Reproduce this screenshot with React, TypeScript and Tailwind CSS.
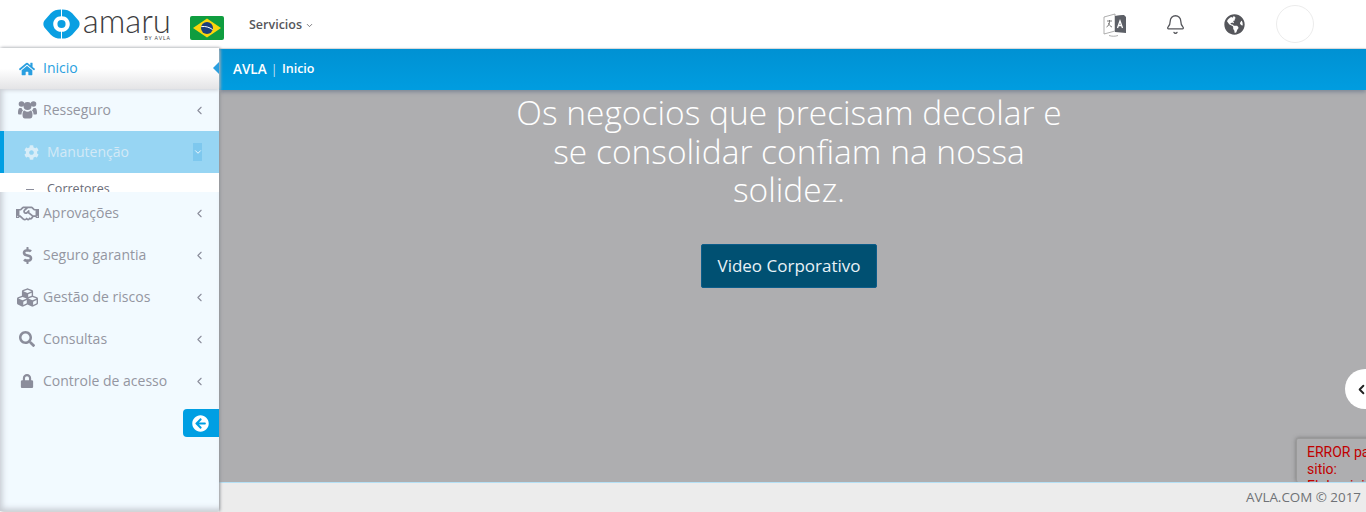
import React from "react";
import {
  FaArrowCircleLeft,
  FaCog,
  FaCubes,
  FaDollarSign,
  FaGlobeAmericas,
  FaHome,
  FaLock,
  FaRegHandshake,
  FaSearch,
} from "react-icons/fa";
import { Bell, ChevronDown, ChevronLeft } from "lucide-react";

const MenuRow = ({ icon, label }: { icon: React.ReactNode; label: string }) => (
  <div className="flex h-[42px] shrink-0 items-center text-[14px] text-[#9496a1]">
    <span className="ml-[9px] mr-[-2px] flex w-[36px] shrink-0 justify-center text-[#8b8d9b]">{icon}</span>
    <span className="flex-1 pb-[2px]">{label}</span>
    <ChevronLeft size={13} strokeWidth={2} className="mr-[13px] text-[#8b8d9b]" />
  </div>
);

const UsersIcon = () => (
  <svg width="19" height="18" viewBox="0 0 19 18" fill="currentColor">
    <circle cx="3.500" cy="3" r="2.800" />
    <circle cx="15.500" cy="3" r="2.800" />
    <circle cx="9.500" cy="5" r="4" />
    <path d="M0 12c0-3 .5-5 2-5h1.500c.3 1 .8 1.800 1.500 2.500-1 .7-1.500 2-1.500 4H1.500C.5 13.500 0 13 0 12z" />
    <path d="M19 12c0-3-.5-5-2-5h-1.500c-.3 1-.8 1.800-1.500 2.500 1 .7 1.500 2 1.500 4h2c1 0 1.500-.5 1.500-1.500z" />
    <path d="M4.500 14c0-2.500.7-4.500 2-4.500 1 .8 2 1.200 3 1.200s2-.4 3-1.200c1.300 0 2 2 2 4.500 0 2.500-1 3.500-2.500 3.500h-5C5.500 17.500 4.500 16.500 4.500 14z" />
  </svg>
);

const AmaruMark = () => (
  <svg width="37" height="30" viewBox="0 0 38 30" className="shrink-0">
    <path
      d="M18.500 0C14 0 11 1 8 4L1.500 11.500c-1.500 2-1.500 5 0 7L8 26c3 3 6 4 10.500 4v-7c-4.500 0-8-3.500-8-8s3.500-8 8-8z"
      fill="#0a9fe2"
    />
    <path
      d="M19.500 0C24 0 27 1 30 4l6.500 7.500c1.500 2 1.500 5 0 7L30 26c-3 3-6 4-10.500 4v-7c4.500 0 8-3.500 8-8s-3.500-8-8-8z"
      fill="#0a9fe2"
    />
    <circle cx="19" cy="15" r="4.200" fill="#0a9fe2" />
  </svg>
);

const BrazilFlag = () => (
  <svg width="34" height="24" viewBox="0 0 34 24" className="shrink-0">
    <rect width="34" height="24" rx="2" fill="#0f9d3f" />
    <path d="M17 2.500 31 12 17 21.500 3 12z" fill="#fbd50c" />
    <circle cx="17" cy="12" r="6" fill="#1c3f7c" />
    <path d="M11.300 10.600c4-.6 8 .5 11.300 3" stroke="#fff" strokeWidth="1" fill="none" />
  </svg>
);

const TranslateIcon = () => (
  <svg width="24" height="26" viewBox="0 0 24 26" className="shrink-0">
    <path d="M1 6l11-3v17L1 23z" fill="#fff" stroke="#9a9a9a" strokeWidth="0.8" />
    <path d="M3 1l9 4v16l9-1V4L12 5z" fill="#5c5f66" />
    <path d="M12 5l9-1 2 2v16l-11-1z" fill="#5c5f66" />
    <path d="M4 10h5M6.500 9v1c0 3-1 5-3 6M5.500 12c.5 2 2 3.500 3.500 4" stroke="#6d6d6d" strokeWidth="0.9" fill="none" />
    <path d="M14.500 17l2.500-7 2.500 7M15.500 14.500h3" stroke="#fff" strokeWidth="1.300" fill="none" />
    <path d="M6 24.500c3 1 6 1 9 0" stroke="#9a9a9a" strokeWidth="0.8" fill="none" />
  </svg>
);

export default function App() {
  return (
    <div className="relative flex h-[512px] w-[1366px] flex-col overflow-hidden bg-white font-['Open_Sans','Lato',sans-serif]">
      <header className="flex h-[49px] shrink-0 items-center border-b border-[#e4e4e4] bg-white">
        <div className="ml-[43px] flex items-center">
          <AmaruMark />
          <div className="ml-[3px] flex w-[88px] flex-col items-end font-['Lato',sans-serif] leading-none text-[#3d3d40]">
            <span className="h-[26px] text-[33px] font-light leading-[26px]">amaru</span>
            <span className="mt-[2px] text-[5px] leading-[7px] tracking-[1px]">BY AVLA</span>
          </div>
        </div>
        <div className="ml-[19px] mt-[7px]">
          <BrazilFlag />
        </div>
        <div className="ml-[25px] mt-[2px] flex items-center gap-[3px] text-[12.500px] font-semibold text-[#55565b]">
          Servicios
          <ChevronDown size={9} strokeWidth={2} />
        </div>
        <div className="ml-auto mr-[52px] flex items-center">
          <TranslateIcon />
          <Bell size={21} strokeWidth={1.500} className="ml-[38px] text-[#55565b]" />
          <FaGlobeAmericas className="ml-[38px] text-[21px] text-[#55565b]" />
          <div className="ml-[31px] h-[38px] w-[38px] rounded-full border border-[#ececec] bg-white" />
        </div>
      </header>

      <div className="flex min-h-0 flex-1">
        <aside className="z-10 -mt-px flex h-[463px] w-[219px] shrink-0 flex-col bg-[#f2faff] shadow-[inset_6px_0_6px_-4px_#c5c9d0,inset_0_-6px_6px_-4px_#c5c9d0,1px_0_3px_#8d9096]">
          <div className="relative flex h-[41px] shrink-0 items-center bg-gradient-to-b from-white via-white to-[#e4e4e6] text-[14px] text-[#2a9fe0] shadow-[0_1px_4px_#c9ccd2]">
            <span className="ml-[9px] mr-[-2px] flex w-[36px] justify-center">
              <FaHome className="text-[16px]" />
            </span>
            <span className="pb-[2px]">Inicio</span>
            <span className="absolute right-0 top-[14px] h-0 w-0 border-y-[6px] border-r-[6px] border-y-transparent border-r-[#2a9fe0]" />
          </div>
          <MenuRow icon={<UsersIcon />} label="Resseguro" />
          <div className="flex h-[42px] shrink-0 items-center border-l-[4px] border-[#009fe3] bg-[#97d5f3] text-[14px] text-[#d3e9f6]">
            <FaCog className="ml-[20px] text-[15px] text-[#d8edf8]" />
            <span className="ml-[8px] flex-1 pb-[2px]">Manutenção</span>
            <span className="mr-[17px] flex h-[18px] w-[9px] items-center justify-center bg-[#7ec8ee]">
              <ChevronDown size={10} strokeWidth={2} className="shrink-0 text-white" />
            </span>
          </div>
          <div className="flex h-[19px] shrink-0 overflow-hidden bg-white pl-[26px] text-[12.500px] text-[#6a6c78]">
            <span className="mt-[16px] h-px w-[8px] bg-[#8b8d9b]" />
            <span className="ml-[13px] leading-[32px]">Corretores</span>
          </div>
          <MenuRow icon={<FaRegHandshake className="text-[23px]" />} label="Aprovações" />
          <MenuRow icon={<FaDollarSign className="text-[17px]" />} label="Seguro garantia" />
          <MenuRow icon={<FaCubes className="text-[21px]" />} label="Gestão de riscos" />
          <MenuRow icon={<FaSearch className="text-[16px]" />} label="Consultas" />
          <MenuRow icon={<FaLock className="text-[14px]" />} label="Controle de acesso" />
          <div className="mt-[7px] flex justify-end">
            <div className="flex h-[28px] w-[36px] items-center rounded-l-[4px] bg-[#009fe3] pl-[9px]">
              <FaArrowCircleLeft className="text-[17px] text-white" />
            </div>
          </div>
        </aside>

        <main className="flex min-w-0 flex-1 flex-col">
          <div className="z-[5] flex h-[41px] shrink-0 items-center bg-gradient-to-b from-[#0091d3] to-[#009de0] pl-[14px] text-[13.500px] font-semibold text-white shadow-[0_2px_4px_#7d8796]">
            AVLA
            <span className="mx-[4px] font-light">|</span>
            <span className="text-[12.500px]">Inicio</span>
          </div>
          <section className="flex min-h-0 flex-1 flex-col items-center bg-[#aeaeb0] pr-[7px] pt-[3px]">
            <h1 className="w-[570px] text-center text-[33.500px] font-light leading-[38.500px] text-white">
              Os negocios que precisam decolar e se consolidar confiam na nossa solidez.
            </h1>
            <button
              type="button"
              className="mt-[35px] h-[44px] w-[176px] shrink-0 rounded-[2px] border border-[#0d5d8a] bg-[#005072] text-[17px] text-[#e8f2f7]"
            >
              Video Corporativo
            </button>
          </section>
          <footer className="z-[5] flex h-[30px] shrink-0 items-center justify-end border-t border-[#b5e0f5] bg-[#ececec] pr-[5px] text-[13.400px] text-[#6f7276]">
            AVLA.COM © 2017
          </footer>
        </main>
      </div>

      <div className="absolute left-[1345px] top-[369px] flex h-[40px] w-[40px] items-center rounded-full bg-white pl-[9px]">
        <ChevronLeft size={15} strokeWidth={3} className="text-[#222]" />
      </div>
      <div className="absolute left-[1296px] top-[438px] h-[44px] w-[90px] overflow-hidden whitespace-nowrap rounded-[2px] border-t border-l border-[#9a9a9a] bg-[#aeaeb0] pl-[10px] pt-[5px] font-['Roboto',sans-serif] text-[14px] leading-[17px] text-[#c00000] shadow-[0_0_4px_#777]">
        ERROR para este
        <br />
        sitio:
        <br />
        El dominio
      </div>
    </div>
  );
}
